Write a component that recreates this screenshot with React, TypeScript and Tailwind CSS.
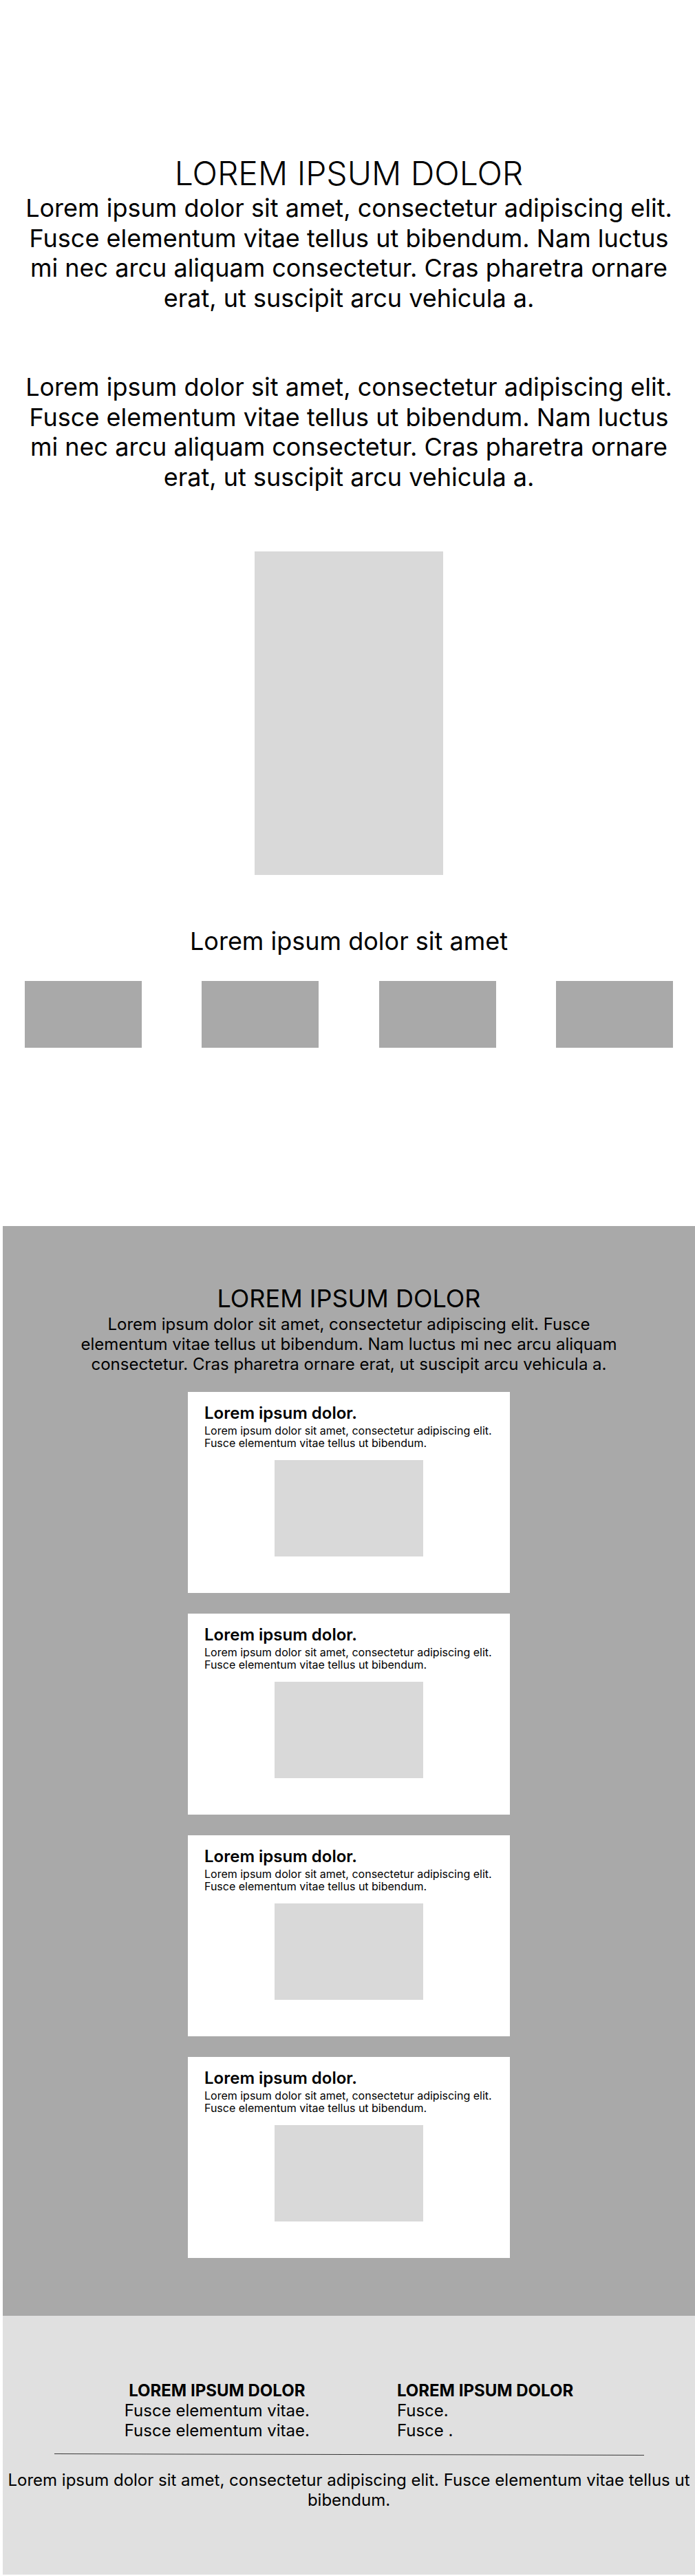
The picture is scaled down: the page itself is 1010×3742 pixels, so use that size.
const INTER = "font-['Inter',_'Noto_Sans',_sans-serif]";

const LONG =
  "Lorem ipsum dolor sit amet, consectetur adipiscing elit. Fusce elementum vitae tellus ut bibendum. Nam luctus mi nec arcu aliquam consectetur. Cras pharetra ornare erat, ut suscipit arcu vehicula a.";

function Card() {
  return (
    <div className="w-[468px] h-[292px] bg-white pt-4 px-6 flex flex-col">
      <h3 className="text-[24px] font-semibold leading-[1.21]">Lorem ipsum dolor.</h3>
      <p className="mt-0.5 text-[16px] leading-[1.15]">
        Lorem ipsum dolor sit amet, consectetur adipiscing elit. Fusce elementum vitae tellus ut bibendum.
      </p>
      <div className="mt-4 mx-auto w-[216px] h-[140px] bg-[#d9d9d9]" />
    </div>
  );
}

export default function App() {
  return (
    <div className={`${INTER} text-black bg-white pl-1`}>
      {/* intro */}
      <section className="pt-[223px] pb-[259px] flex flex-col items-center text-center">
        <h1 className="text-[48px] font-light leading-[1.21]">LOREM IPSUM DOLOR</h1>
        <p className="w-[960px] text-[36px] leading-[1.21]">{LONG}</p>
        <p className="w-[960px] mt-[86px] text-[36px] leading-[1.21]">{LONG}</p>
        <div className="mt-[86px] w-[274px] h-[470px] bg-[#d9d9d9]" />
        <h2 className="mt-[75px] text-[36px] leading-[1.21]">Lorem ipsum dolor sit amet</h2>
        <div className="mt-[35px] w-full px-8 flex justify-between">
          {[0, 1, 2, 3].map((i) => (
            <div key={i} className="w-[170px] h-[97px] bg-[#a9a9a9]" />
          ))}
        </div>
      </section>

      {/* cards */}
      <section className="bg-[#a9a9a9] pt-[84px] pb-[84px] flex flex-col items-center">
        <h2 className="text-[36px] leading-[1.21]">LOREM IPSUM DOLOR</h2>
        <p className="w-[800px] text-[24px] leading-[1.21] text-center">{LONG}</p>
        <div className="mt-[26px] flex flex-col gap-[30px]">
          {[0, 1, 2, 3].map((i) => (
            <Card key={i} />
          ))}
        </div>
      </section>

      {/* footer */}
      <footer className="bg-[#e0e0e0] pt-[94px] pb-[94px] flex flex-col items-center">
        <div className="flex gap-[127px] text-[24px] leading-[1.21]">
          <div className="flex flex-col items-center text-center">
            <h4 className="font-bold">LOREM IPSUM DOLOR</h4>
            <span>Fusce elementum vitae.</span>
            <span>Fusce elementum vitae.</span>
          </div>
          <div className="flex flex-col">
            <h4 className="font-bold">LOREM IPSUM DOLOR</h4>
            <span>Fusce.</span>
            <span>Fusce .</span>
          </div>
        </div>
        <div className="mt-5 w-[857px] h-px bg-[#3a3a3a] rotate-[0.13deg]" />
        <p className="mt-[22px] text-[24px] leading-[1.21] text-center">
          Lorem ipsum dolor sit amet, consectetur adipiscing elit. Fusce elementum vitae tellus ut bibendum.
        </p>
      </footer>
    </div>
  );
}
